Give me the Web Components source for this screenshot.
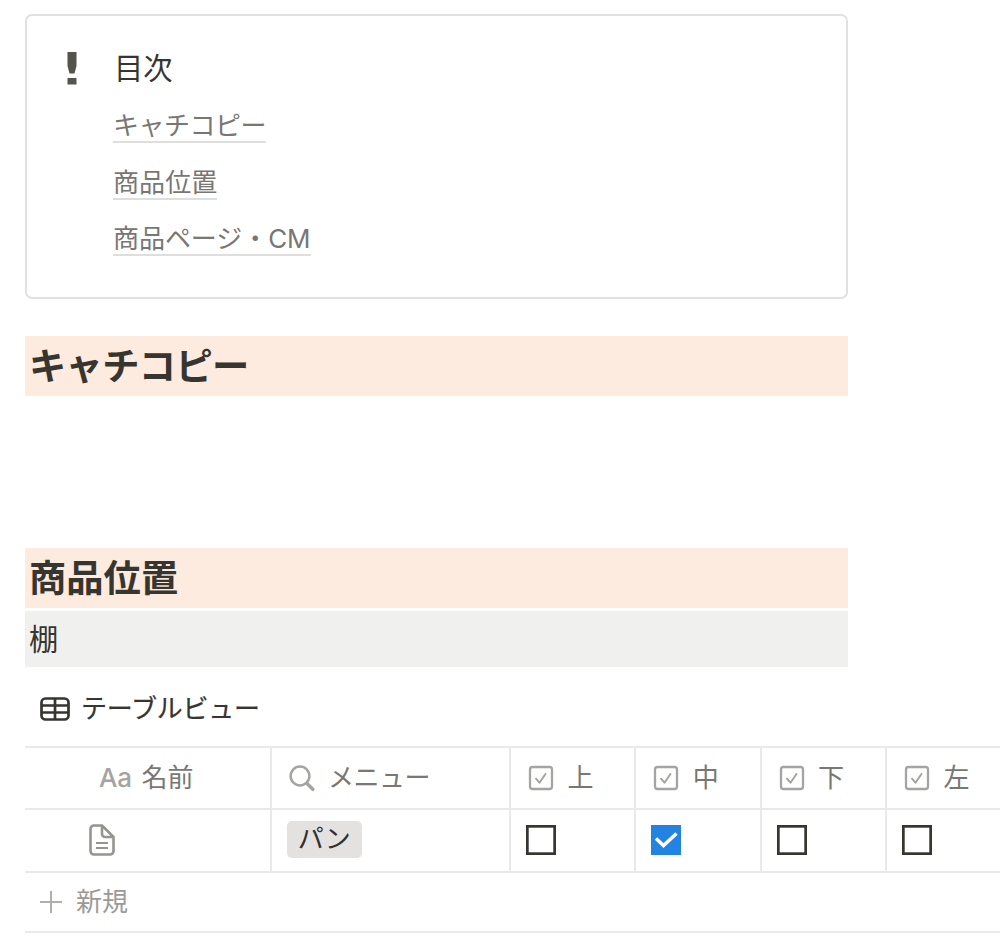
<!DOCTYPE html>
<html lang="ja">
<head>
<meta charset="utf-8">
<title>目次</title>
<style>
html,body{margin:0;background:#fff;overflow:hidden}
body{font-family:Inter,"Noto Sans CJK JP",sans-serif;color:#37352f;height:944px}
</style>
</head>
<body>
<doc-page></doc-page>
<script>
const define = (name, html) => {
  const t = document.createElement('template');
  t.innerHTML = html;
  customElements.define(name, class extends HTMLElement {
    constructor() {
      super();
      this.attachShadow({ mode: 'open' }).append(t.content.cloneNode(true));
    }
  });
};

define('toc-link', `<style>
:host{display:block;height:56.5px;color:#787774;font-size:26px}
a{display:inline-block;box-sizing:border-box;height:35px;padding-top:1px;line-height:33px;border-bottom:2px solid #dededd;white-space:nowrap;letter-spacing:var(--track,0)}
</style><a><slot></slot></a>`);

define('callout-card', `<style>
:host{display:flex;box-sizing:border-box;width:822.5px;height:285px;border:2px solid #e1e1e0;border-radius:7px;padding:33px 0 0 38px}
svg{flex:none;width:14px;height:36px;margin-top:2px}
.body{margin-left:34px}
.title{font-size:29.3px;line-height:40px;height:59px;padding-left:1px}
</style>
<svg viewBox="0 0 14 36"><path d="M2.500 1h9v14L9.500 22.500h-5L2.500 15zM2.500 27h9v6.500h-9z" fill="#55534e"/></svg>
<div class="body"><div class="title"><slot name="title"></slot></div><slot></slot></div>`);

define('section-heading', `<style>
:host{display:block;box-sizing:border-box;width:822.5px;height:60px;background:#fcebde;padding-left:4px;font-size:37.3px;line-height:56px;font-weight:600;font-family:"Noto Sans CJK JP",sans-serif;letter-spacing:var(--track,0)}
</style><slot></slot>`);

define('sub-heading', `<style>
:host{display:block;box-sizing:border-box;width:822.5px;height:56px;background:#f0f0ee;padding-left:4px;font-size:29.3px;line-height:58px}
</style><slot></slot>`);

define('view-tab', `<style>
:host{display:flex;align-items:center;height:79px;box-sizing:border-box;padding:5px 0 0 15px;font-size:26px}
svg{flex:none;width:30px;height:24px;margin-right:11px}
span{letter-spacing:-.25px;white-space:nowrap;line-height:40px;-webkit-text-stroke:.2px #37352f}
</style>
<svg viewBox="0 0 30 24" fill="none" stroke="#37352f" stroke-width="2.700"><rect x="1.500" y="1.500" width="27" height="21" rx="4"/><path d="M1.500 8.500h27M1.500 15.500h27M15 1.500v21"/></svg>
<span><slot></slot></span>`);

define('icon-check', `<style>:host{display:block;width:26px;height:26px}svg{display:block}</style>
<svg width="26" height="26" viewBox="0 0 26 26" fill="none" stroke="#a5a4a0"><rect x="2" y="2" width="22" height="22" rx="2.500" stroke-width="2.300"/><path d="M8 13.700l3.500 4L17.500 9" stroke-width="2" stroke-linecap="round" stroke-linejoin="round"/></svg>`);

define('icon-search', `<style>:host{display:block;width:26px;height:28px}svg{display:block}</style>
<svg width="26" height="28" viewBox="0 0 26 28" fill="none" stroke="#a5a4a0"><circle cx="11" cy="12" r="9.400" stroke-width="2.500"/><path d="M18 19.500l5.800 5.800" stroke-width="3.500" stroke-linecap="round"/></svg>`);

define('icon-page', `<style>:host{display:block;width:26px;height:32px}svg{display:block}</style>
<svg width="26" height="32" viewBox="0 0 26 32" fill="none" stroke="#959490" stroke-width="2.600" stroke-linejoin="round"><path d="M5 1.500h8L24.500 13v14a3.500 3.500 0 0 1-3.500 3.500H5A3.500 3.500 0 0 1 1.500 27V5A3.500 3.500 0 0 1 5 1.500z"/><path d="M13 2v8a3 3 0 0 0 3 3h8"/><path d="M7 19h12M7 24h12" stroke-width="1.900"/></svg>`);

define('check-box', `<style>
:host{display:block;width:30px;height:30px}
svg{display:block}
.on,:host([checked]) .off{display:none}
:host([checked]) .on{display:inline}
</style><svg width="30" height="30" viewBox="0 0 30 30" fill="none">
<rect class="off" x="1.350" y="1.350" width="27.300" height="27.300" stroke="#37352f" stroke-width="2.700"/>
<g class="on"><path d="M0 0h30v30H0z" fill="#2383e2"/><path d="M5 13.500l7.500 7L25.500 8.500" stroke="#fff" stroke-width="3.500"/></g></svg>`);

define('option-tag', `<style>
:host{display:block;width:75px;height:37px;border-radius:5px;background:#e3e2e0;color:#32302c;font-size:26px;line-height:35px;text-align:center;letter-spacing:-.5px;text-indent:-1px}
</style><slot></slot>`);

define('table-cell', `<style>
:host{display:flex;align-items:center;box-sizing:border-box;border-right:2px solid #e9e9e7;border-bottom:2px solid #e9e9e7;padding-left:var(--pad,17px);padding-bottom:var(--lift,1px);font-size:26px;color:#787774;white-space:nowrap;line-height:38px}
:host(:last-child){border-right:0}
slot[name=icon]{display:block;margin-right:var(--gap,13.5px)}
.label{letter-spacing:var(--track,0)}
</style><slot name="icon"></slot><span class="label"><slot></slot></span>`);

define('data-table', `<style>
:host{display:block;border-top:2px solid #e9e9e7;width:975px;overflow:hidden}
.grid{display:grid;grid-template-columns:247px 239px 125.300px 125.300px 125.300px 125.300px;grid-template-rows:62px 63px}
.row2{--pad:15px;--lift:2px}
.new{display:flex;align-items:center;height:58px;border-bottom:2px solid #e9e9e7;color:#9b9a97;font-size:26px;padding-left:15px;line-height:38px}
.new svg{margin-right:14px}
.new span{margin-top:-1px}
.aa{font-size:26px;font-weight:500;color:#a5a4a0;line-height:38px;letter-spacing:-.3px}
</style>
<div class="grid">
<table-cell style="--pad:74px;--gap:10px"><span slot="icon" class="aa">Aa</span>名前</table-cell>
<table-cell style="--track:-.5px;--gap:13px"><icon-search slot="icon"></icon-search>メニュー</table-cell>
<table-cell><icon-check slot="icon"></icon-check>上</table-cell>
<table-cell><icon-check slot="icon"></icon-check>中</table-cell>
<table-cell><icon-check slot="icon"></icon-check>下</table-cell>
<table-cell style="border-right:0"><icon-check slot="icon"></icon-check>左</table-cell>
<table-cell class="row2" style="--pad:64px"><icon-page slot="icon"></icon-page></table-cell>
<table-cell class="row2"><option-tag slot="icon">パン</option-tag></table-cell>
<table-cell class="row2"><check-box slot="icon"></check-box></table-cell>
<table-cell class="row2"><check-box slot="icon" checked></check-box></table-cell>
<table-cell class="row2"><check-box slot="icon"></check-box></table-cell>
<table-cell class="row2"><check-box slot="icon"></check-box></table-cell>
</div>
<div class="new"><svg width="22" height="22" viewBox="0 0 22 22"><path d="M0 11h22M11 0v22" stroke="#b0afac" stroke-width="2"/></svg><span>新規</span></div>`);

define('doc-page', `<style>
:host{display:block;padding:14px 0 0 25px}
.first{margin-top:37px}
.second{margin-top:151.500px;margin-bottom:3.500px}
</style>
<callout-card><span slot="title">目次</span>
<toc-link style="--track:-.5px">キャチコピー</toc-link><toc-link style="--track:.1px">商品位置</toc-link><toc-link style="--track:-.05px">商品ページ・CM</toc-link></callout-card>
<section-heading class="first" style="--track:-.7px">キャチコピー</section-heading>
<section-heading class="second">商品位置</section-heading>
<sub-heading>棚</sub-heading>
<view-tab>テーブルビュー</view-tab>
<data-table></data-table>`);
</script>
</body>
</html>
